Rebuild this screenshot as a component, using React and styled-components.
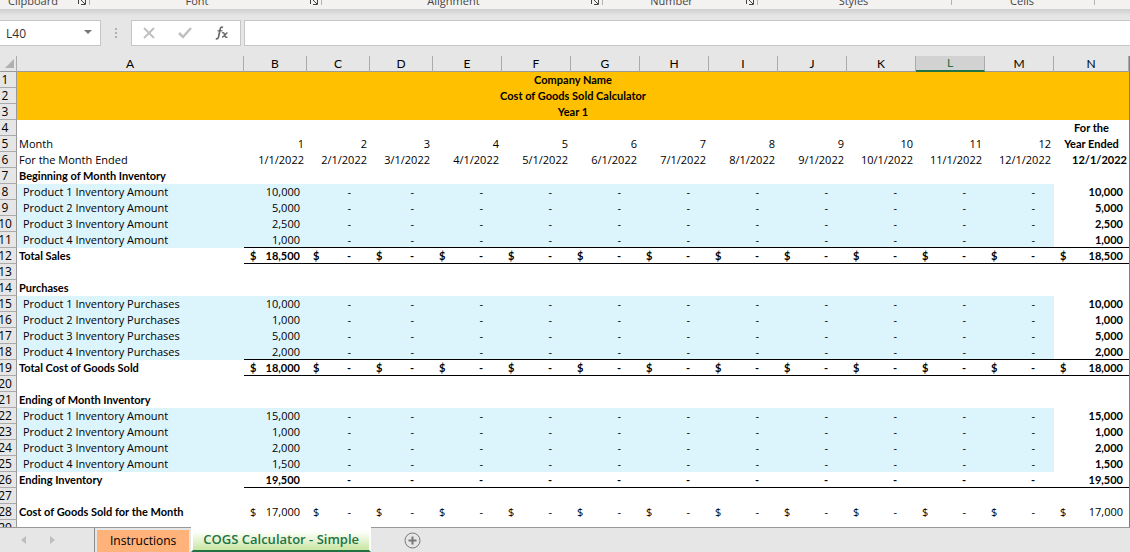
import React from "react";
import styled, { createGlobalStyle } from "styled-components";

const GlobalStyle = createGlobalStyle`
  *, *::before, *::after {
    box-sizing: border-box;
  }
  body {
    margin: 0;
    background: #e6e6e6;
    font-family: "Open Sans", "Noto Sans", sans-serif;
    font-size: 11px;
    color: #000;
  }
  button, input {
    font-family: inherit;
  }
`;

const Window = styled.div`
  display: flex;
  flex-direction: column;
  height: 100vh;
  overflow: hidden;
`;

const Ribbon = styled.div`
  display: flex;
  align-items: flex-end;
  flex: none;
  height: 9px;
  overflow: hidden;
  background: #f3f2f1;
`;

const RibbonGroup = styled.div`
  display: flex;
  align-items: flex-end;
  flex: ${(props) => props.$size} 1 0;
  min-width: 0;
  height: 20px;
`;

const RibbonLabel = styled.span`
  flex: 1;
  padding-right: ${(props) => props.$shift || 0}px;
  line-height: 16px;
  text-align: center;
  color: #444;
`;

const RibbonDivider = styled.span`
  flex: none;
  width: 1px;
  height: 16px;
  margin-bottom: 4px;
  margin-left: 2px;
  background: #b5b3b1;
`;

const Launcher = styled.button`
  display: flex;
  flex: none;
  width: 9px;
  height: 12px;
  margin-bottom: 3px;
  padding: 0;
  border: 0;
  background: none;
  color: #444;
`;

const FormulaBar = styled.div`
  display: flex;
  flex: none;
  gap: 3px;
  height: 47px;
  padding: 11px 0 10px;
  background: linear-gradient(#cfcfcf, #e6e6e6 7px);
`;

const NameBox = styled.div`
  display: flex;
  align-items: center;
  width: 101px;
  border: 1px solid #c6c6c6;
  border-left: 0;
  background: #fff;
`;

const NameInput = styled.input`
  flex: 1;
  min-width: 0;
  padding: 0 0 0 6px;
  border: 0;
  background: none;
  font-size: 12px;
  color: #333;
`;

const DropButton = styled.button`
  display: flex;
  padding: 0 8px 2px;
  border: 0;
  background: none;
`;

const Grip = styled.div`
  display: flex;
  flex-direction: column;
  align-items: center;
  justify-content: center;
  gap: 2px;
  width: 24px;

  span {
    width: 2px;
    height: 2px;
    background: #b0b0b0;
  }
`;

const FormulaButtons = styled.div`
  display: flex;
  align-items: center;
  justify-content: space-around;
  width: 110px;
  border: 1px solid #c6c6c6;
  background: #fff;
`;

const IconButton = styled.button`
  display: flex;
  padding: 0;
  border: 0;
  background: none;
`;

const FormulaInput = styled.input`
  flex: 1;
  min-width: 0;
  border: 1px solid #c6c6c6;
  border-right: 0;
  background: #fff;
  font-size: 12px;
`;

const SheetArea = styled.main`
  flex: 1;
  min-height: 0;
  overflow: hidden;
  background: #fff;
`;

const Sheet = styled.table`
  width: 100%;
  table-layout: fixed;
  border-collapse: separate;
  border-spacing: 0;
  border-right: 1px solid #2f9fb0;
`;

const Col = styled.col`
  width: ${(props) => (props.$w ? `${props.$w}px` : "auto")};
`;

const ColumnHead = styled.th`
  height: 16px;
  padding: 0;
  border-bottom: ${(props) =>
    props.$selected ? "2px solid #217346" : "1px solid #999"};
  border-right: 1px solid #ababab;
  background: ${(props) => (props.$selected ? "#d2d2d2" : "#e6e6e6")};
  color: ${(props) => (props.$selected ? "#217346" : "#000")};
  font-family: Lato, sans-serif;
  font-size: 12px;
  font-weight: 400;
  line-height: 14px;
`;

const Corner = styled(ColumnHead)`
  svg {
    display: block;
    margin-left: 5px;
  }
`;

const RowHead = styled.th`
  height: 16px;
  padding: 0 6px 0 0;
  border-right: 1px solid #999;
  border-bottom: 1px solid #ababab;
  background: #e6e6e6;
  font-size: 12px;
  font-weight: 400;
  line-height: 15px;
  white-space: nowrap;

  span {
    display: flex;
    justify-content: center;
  }
`;

const Cell = styled.td`
  height: 16px;
  padding: 0 ${(props) => props.$right || 0}px 0 ${(props) => props.$left || 0}px;
  border-bottom: ${(props) => (props.$line ? "1px solid #000" : "0")};
  background: ${(props) => (props.$input ? "#dcf5fd" : "#fff")};
  font-family: ${(props) => (props.$bold ? "Lato, sans-serif" : "inherit")};
  font-weight: ${(props) => (props.$bold ? 700 : 400)};
  line-height: 15px;
  text-align: ${(props) => props.$align || "right"};
  vertical-align: top;
  white-space: nowrap;
`;

const TitleCell = styled(Cell)`
  background: #ffc000;
`;

const Money = styled.div`
  display: flex;
  justify-content: space-between;
`;

const TabBar = styled.footer`
  display: flex;
  flex: none;
  height: 25px;
  border-top: 1px solid #999;
  background: #e6e6e6;
`;

const TabNav = styled.div`
  display: flex;
  align-items: center;
  gap: 24px;
  width: 95px;
  margin-right: 2px;
  padding-left: 21px;
  border-right: 1px solid #8a8a8a;
`;

const Tab = styled.button`
  height: 22px;
  margin-top: 2px;
  padding: 0 13px 2px;
  border: 0;
  background: #ffb27a;
  font-size: 12px;
  color: #000;
`;

const ActiveTab = styled.button`
  height: 25px;
  margin-top: -1px;
  margin-left: 2px;
  padding: 0 10px;
  border: solid #fff;
  border-width: 0 2px;
  border-bottom: 2px solid #217346;
  background: linear-gradient(#fff 2px, #fbfdf6 6px, #c8e6a0);
  font-size: 13px;
  font-weight: 600;
  color: #217346;
`;

const AddTab = styled(IconButton)`
  align-items: center;
  margin-left: 33px;
`;

const groups = [
  { label: "Clipboard", size: 90, shift: 12, launcher: true },
  { label: "Font", size: 232, shift: 6, launcher: true },
  { label: "Alignment", size: 281, shift: 6, launcher: true },
  { label: "Number", size: 155, shift: 6, launcher: true },
  { label: "Styles", size: 194 },
  { label: "Cells", size: 143 },
];

const columns = [
  { name: "A" },
  ...["B", "C", "D"].map((name) => ({ name, width: 63 })),
  ..."EFGHIJKLM".split("").map((name) => ({ name, width: 69 })),
  { name: "N", width: 75 },
];

const months = [1, 2, 3, 4, 5, 6, 7, 8, 9, 10, 11, 12];

const rows = [
  { type: "title", label: "Company Name" },
  { type: "title", label: "Cost of Goods Sold Calculator" },
  { type: "title", label: "Year 1" },
  { type: "head", label: "", values: [], total: "For the" },
  { type: "head", label: "Month", values: months, total: "Year Ended" },
  {
    type: "head",
    label: "For the Month Ended",
    values: months.map((m) => `${m}/1/2022`),
    total: "12/1/2022",
    totalRight: true,
  },
  { type: "section", label: "Beginning of Month Inventory" },
  { type: "input", label: "Product 1 Inventory Amount", value: "10,000" },
  { type: "input", label: "Product 2 Inventory Amount", value: "5,000" },
  { type: "input", label: "Product 3 Inventory Amount", value: "2,500" },
  { type: "input", label: "Product 4 Inventory Amount", value: "1,000", line: true },
  { type: "total", label: "Total Sales", value: "18,500", line: true, money: true, bold: true },
  { type: "section", label: "" },
  { type: "section", label: "Purchases" },
  { type: "input", label: "Product 1 Inventory Purchases", value: "10,000" },
  { type: "input", label: "Product 2 Inventory Purchases", value: "1,000" },
  { type: "input", label: "Product 3 Inventory Purchases", value: "5,000" },
  { type: "input", label: "Product 4 Inventory Purchases", value: "2,000", line: true },
  { type: "total", label: "Total Cost of Goods Sold", value: "18,000", line: true, money: true, bold: true },
  { type: "section", label: "" },
  { type: "section", label: "Ending of Month Inventory" },
  { type: "input", label: "Product 1 Inventory Amount", value: "15,000" },
  { type: "input", label: "Product 2 Inventory Amount", value: "1,000" },
  { type: "input", label: "Product 3 Inventory Amount", value: "2,000" },
  { type: "input", label: "Product 4 Inventory Amount", value: "1,500" },
  { type: "total", label: "Ending Inventory", value: "19,500", line: true, bold: true },
  { type: "section", label: "" },
  { type: "total", label: "Cost of Goods Sold for the Month", value: "17,000", money: true },
  { type: "section", label: "" },
];

function RowCells({ row }) {
  if (row.type === "title") {
    return (
      <TitleCell colSpan={14} $bold $align="center">
        {row.label}
      </TitleCell>
    );
  }

  if (row.type === "section") {
    return (
      <>
        <Cell $bold $left={2} $align="left">
          {row.label}
        </Cell>
        <Cell colSpan={13} />
      </>
    );
  }

  if (row.type === "head") {
    return (
      <>
        <Cell $left={2} $align="left">
          {row.label}
        </Cell>
        {months.map((m, i) => (
          <Cell key={m} $right={3}>
            {row.values[i]}
          </Cell>
        ))}
        <Cell
          $bold
          $right={row.totalRight ? 2 : 0}
          $align={row.totalRight ? "right" : "center"}
        >
          {row.total}
        </Cell>
      </>
    );
  }

  const isInput = row.type === "input";
  const amount = (text) =>
    row.money ? (
      <Money>
        <span>$</span>
        <span>{text}</span>
      </Money>
    ) : (
      text
    );

  return (
    <>
      <Cell $input={isInput} $bold={!isInput} $left={isInput ? 6 : 2} $align="left">
        {row.label}
      </Cell>
      {months.map((m, i) => (
        <Cell
          key={m}
          $input={isInput}
          $bold={row.bold}
          $line={row.line}
          $left={6}
          $right={i === 0 ? 7 : 19}
        >
          {amount(i === 0 ? row.value : "-")}
        </Cell>
      ))}
      <Cell $bold={isInput || row.bold} $line={row.line} $left={6} $right={6}>
        {amount(row.value)}
      </Cell>
    </>
  );
}

function App() {
  return (
    <Window>
      <GlobalStyle />
      <Ribbon>
        {groups.map((group) => (
          <RibbonGroup key={group.label} $size={group.size}>
            <RibbonLabel $shift={group.shift}>{group.label}</RibbonLabel>
            {group.launcher && (
              <Launcher aria-label={`${group.label} settings`}>
                <svg width="9" height="12" viewBox="0 0 9 12" fill="none" stroke="currentColor">
                  <path d="M0.5 10V3.500H6M2.500 5.500L7 10M7.500 5v5.500H3" />
                </svg>
              </Launcher>
            )}
            <RibbonDivider />
          </RibbonGroup>
        ))}
        <RibbonGroup $size={35} />
      </Ribbon>

      <FormulaBar>
        <NameBox>
          <NameInput aria-label="Name box" defaultValue="L40" />
          <DropButton aria-label="Show names">
            <svg width="8" height="4" viewBox="0 0 8 4">
              <path d="M0 0h8L4 4z" fill="#777" />
            </svg>
          </DropButton>
        </NameBox>
        <Grip>
          <span />
          <span />
          <span />
        </Grip>
        <FormulaButtons>
          <IconButton aria-label="Cancel">
            <svg width="12" height="12" viewBox="0 0 12 12">
              <path d="M1 1l10 10M11 1L1 11" stroke="#c0c0c0" strokeWidth="2" />
            </svg>
          </IconButton>
          <IconButton aria-label="Enter">
            <svg width="14" height="12" viewBox="0 0 14 12" fill="none">
              <path d="M1 6l4 4 8-9" stroke="#c0c0c0" strokeWidth="2.500" />
            </svg>
          </IconButton>
          <IconButton aria-label="Insert function">
            <svg width="14" height="14" viewBox="0 0 14 14" fill="none" stroke="#666">
              <path d="M8 1.500C6.500 0.500 5.500 1.500 5.200 3L3.500 11C3.200 12.500 2.200 13.300 0.800 12.500" strokeWidth="1.600" />
              <path d="M2.500 4.800h5" strokeWidth="1.200" />
              <path d="M7 7c1.500-1 2 0 2.500 1.800S10.800 12 12.500 11M12.500 6.800c-1.500 0-3.500 4.400-5.500 4.400" strokeWidth="1.400" />
            </svg>
          </IconButton>
        </FormulaButtons>
        <FormulaInput aria-label="Formula" />
      </FormulaBar>

      <SheetArea>
        <Sheet>
          <colgroup>
            <Col $w={17} />
            {columns.map((c) => (
              <Col key={c.name} $w={c.width} />
            ))}
          </colgroup>
          <thead>
            <tr>
              <Corner aria-label="Select all">
                <svg width="9" height="9" viewBox="0 0 9 9">
                  <path d="M9 0v9H0z" fill="#b0b0b0" />
                </svg>
              </Corner>
              {columns.map((c) => (
                <ColumnHead key={c.name} scope="col" $selected={c.name === "L"}>
                  {c.name}
                </ColumnHead>
              ))}
            </tr>
          </thead>
          <tbody>
            {rows.map((row, i) => (
              <tr key={i}>
                <RowHead scope="row">
                  <span>{i + 1}</span>
                </RowHead>
                <RowCells row={row} />
              </tr>
            ))}
          </tbody>
        </Sheet>
      </SheetArea>

      <TabBar>
        <TabNav>
          <IconButton aria-label="Previous sheet">
            <svg width="5" height="8" viewBox="0 0 5 8">
              <path d="M5 0v8L0 4z" fill="#bdbdbd" />
            </svg>
          </IconButton>
          <IconButton aria-label="Next sheet">
            <svg width="5" height="8" viewBox="0 0 5 8">
              <path d="M0 0v8l5-4z" fill="#bdbdbd" />
            </svg>
          </IconButton>
        </TabNav>
        <Tab>Instructions</Tab>
        <ActiveTab>COGS Calculator - Simple</ActiveTab>
        <AddTab aria-label="New sheet">
          <svg width="17" height="17" viewBox="0 0 17 17" fill="none" stroke="#777">
            <circle cx="8.500" cy="8.500" r="7.500" />
            <path d="M8.500 4.500v8M4.500 8.500h8" strokeWidth="2" />
          </svg>
        </AddTab>
      </TabBar>
    </Window>
  );
}

export default App;
